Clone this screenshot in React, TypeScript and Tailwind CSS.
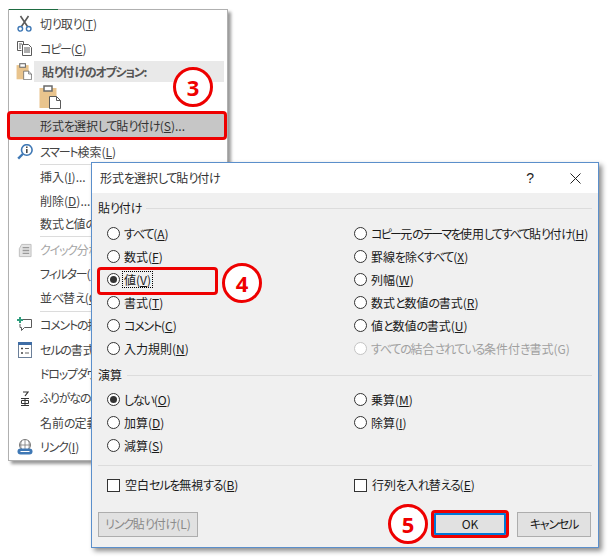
import React from "react";

const FONT = "font-['Noto_Sans_CJK_JP','Noto_Sans',sans-serif] [font-feature-settings:'palt']";

function T({ children, tight }: { children: string; tight?: boolean }) {
  const parts = children.split(/([\u3040-\u30ff]+)/);
  return (
    <>
      {parts.map((p, i) =>
        i % 2 === 1 ? (
          <span key={i} className={tight ? "tracking-[-1.7px]" : "tracking-[-1.2px]"}>
            {p}
          </span>
        ) : (
          <React.Fragment key={i}>{p}</React.Fragment>
        ),
      )}
    </>
  );
}

function L(text: string, k?: string, suffix?: string, tight?: boolean) {
  return (
    <>
      <T tight={tight}>{text}</T>
      {k && (
        <>
          (<u>{k}</u>)
        </>
      )}
      {suffix}
    </>
  );
}

function Scissors() {
  return (
    <svg width="15" height="17" viewBox="0 0 15 17" fill="none">
      <path d="M3.5 1l7 10.5M11.5 1l-7 10.5" stroke="#5a5a5a" strokeWidth="1.6" />
      <circle cx="3.3" cy="13.8" r="2.3" stroke="#3f78b5" strokeWidth="1.4" />
      <circle cx="11.7" cy="13.8" r="2.3" stroke="#3f78b5" strokeWidth="1.4" />
    </svg>
  );
}
function Copy() {
  return (
    <svg width="15" height="15" viewBox="0 0 15 15" fill="none" stroke="#5a5a5a">
      <path d="M.5.5h6v3M.5.5v9h4M2 3h3M2 5h2M2 7h2" />
      <path d="M5.5 3.5h6l3 3v8h-9zM7 7h6M7 9h6M7 11h6" fill="#fff" />
    </svg>
  );
}
function Clipboard({ big }: { big?: boolean }) {
  return (
    <svg width={big ? 22 : 16} height={big ? 24 : 17} viewBox="0 0 22 24" fill="none">
      <rect x="0.5" y="3" width="17" height="20" fill="#e9c48d" />
      <rect x="5" y="1" width="8" height="5" fill="#fff" stroke="#6a6a6a" strokeWidth="1.5" />
      <path d="M10.5 11.5h7l4 4v8h-11z" fill="#fff" stroke="#5a5a5a" />
      <path d="M17.5 11.5v4h4" stroke="#5a5a5a" />
    </svg>
  );
}
function Info() {
  return (
    <svg width="16" height="16" viewBox="0 0 16 16" fill="none">
      <circle cx="9.8" cy="6" r="5.3" stroke="#3f78b5" strokeWidth="1.6" />
      <path d="M5.8 10L1.2 14.6" stroke="#3f78b5" strokeWidth="2.4" />
      <path d="M9.8 5v4M9.8 2.6V4" stroke="#4a4a4a" strokeWidth="1.6" />
    </svg>
  );
}
function Quick() {
  return (
    <svg width="15" height="15" viewBox="0 0 16 16" fill="none" stroke="#bdbdbd">
      <path d="M5 1.5h10v13H2.5V6z" fill="#e4e4e4" />
      <path d="M6 5h7M6 8h7M6 11h7" strokeWidth="1.4" stroke="#9a9a9a" />
    </svg>
  );
}
function Comment() {
  return (
    <svg width="15" height="15" viewBox="0 0 15 15" fill="none">
      <path d="M6 2.5h8.5v8H7.5l-3 3v-3H3V7" stroke="#5a5a5a" />
      <path d="M3 0v6M0 3h6" stroke="#2f9e7e" strokeWidth="2" />
    </svg>
  );
}
function Format() {
  return (
    <svg width="14" height="16" viewBox="0 0 14 16" fill="none">
      <rect x=".5" y=".5" width="13" height="15" fill="#fff" stroke="#6b7f99" />
      <rect x="0" y="0" width="14" height="3" fill="#3f6da5" />
      <path d="M3 6.5h2M3 11h2" stroke="#444" strokeWidth="1.5" />
      <path d="M7 6.5h4M7 11h4" stroke="#666" />
    </svg>
  );
}
function Furigana() {
  return (
    <svg width="8" height="15" viewBox="0 0 8 15" fill="none" stroke="#333">
      <path d="M2 1h5L4 5" strokeWidth="1.2" />
      <path d="M0 7.5h8M.5 9.5h7v3h-7zM4 7.5v7M0 14.5h8" />
    </svg>
  );
}
function LinkIcon() {
  return (
    <svg width="16" height="16" viewBox="0 0 16 16" fill="none">
      <circle cx="8" cy="6" r="5.5" stroke="#7a7a7a" />
      <path d="M2.5 6h11M8 .5v11M4.5 1.5c-1 3-1 6 0 9M11.5 1.5c1 3 1 6 0 9" stroke="#7a7a7a" strokeWidth=".8" />
      <rect x=".5" y="9.5" width="15" height="6" rx="3" fill="#3f78b5" />
      <path d="M3.5 12.5h3M9.5 12.5h3M6 12.5h4" stroke="#fff" strokeWidth="1.2" />
    </svg>
  );
}

type Row = { h: number; label?: React.ReactNode; icon?: React.ReactNode; disabled?: boolean; sep?: boolean };

const rowsTop: Row[] = [
  { h: 25, label: L("切り取り", "T"), icon: <Scissors /> },
  { h: 25, label: L("コピー", "C"), icon: <Copy /> },
];

const rowsBottom: Row[] = [
  { h: 23, label: L("スマート検索", "L"), icon: <Info /> },
  { h: 2, sep: true },
  { h: 24, label: L("挿入", "I", "...") },
  { h: 24, label: L("削除", "D", "...") },
  { h: 22, label: L("数式と値のクリア", "N") },
  { h: 3, sep: true },
  { h: 24, label: L("クイック分析", "Q"), icon: <Quick />, disabled: true },
  { h: 24, label: L("フィルター", "E") },
  { h: 24, label: L("並べ替え", "O") },
  { h: 2, sep: true },
  { h: 25, label: L("コメントの挿入", "M"), icon: <Comment /> },
  { h: 25, label: L("セルの書式設定", "F", "..."), icon: <Format /> },
  { h: 24, label: L("ドロップダウン リストから選択", "K", "...") },
  { h: 24, label: L("ふりがなの表示", "S"), icon: <Furigana /> },
  { h: 25, label: L("名前の定義", "A", "...") },
  { h: 24, label: L("リンク", "I"), icon: <LinkIcon /> },
];

function MenuRow({ r }: { r: Row }) {
  if (r.sep) {
    return (
      <div style={{ height: r.h }} className="flex items-center pl-[31px] pr-[3px]">
        <div className="h-px w-full bg-[#dcdcdc]" />
      </div>
    );
  }
  return (
    <div style={{ height: r.h }} className="flex items-center">
      <div className="flex w-[31px] shrink-0 justify-center">{r.icon}</div>
      <div className={`whitespace-nowrap text-[12px] leading-[16px] ${r.disabled ? "text-[#a6a6a6]" : "text-[#444]"}`}>{r.label}</div>
    </div>
  );
}

function ContextMenu() {
  return (
    <div className="absolute left-[8px] top-[9px] flex h-[452px] w-[220px] flex-col border border-[#b0b0b0] bg-white pt-[1px] shadow-[3px_3px_3px_rgba(0,0,0,0.4)]">
      {rowsTop.map((r, i) => (
        <MenuRow key={i} r={r} />
      ))}
      <div className="flex h-[21px] items-center">
        <div className="flex w-[24px] shrink-0 justify-center pl-[5px]">
          <Clipboard />
        </div>
        <div className="ml-[1px] mr-[3px] flex h-full flex-1 items-center bg-[#e9e9e9] pl-[8px] text-[12px] font-bold leading-none text-[#555]">
          <span>{L("貼り付けのオプション:")}</span>
        </div>
      </div>
      <div className="flex h-[29px] items-center pl-[30px]">
        <Clipboard big />
      </div>
      <div className="relative -ml-[2px] flex h-[29px] w-[220px] shrink-0 items-center rounded-[4px] border-[3px] border-[#ee0000] bg-[#c6c6c6] pl-[30px] text-[12px] leading-none text-[#333]">
        <span>{L("形式を選択して貼り付け", "S", "...")}</span>
      </div>
      {rowsBottom.map((r, i) => (
        <MenuRow key={i} r={r} />
      ))}
    </div>
  );
}

function Radio({ on, disabled }: { on?: boolean; disabled?: boolean }) {
  return (
    <span
      className={`flex h-[13px] w-[13px] shrink-0 items-center justify-center rounded-full border bg-white ${disabled ? "border-[#c4c4c4]" : "border-[#333]"}`}
    >
      {on && <span className="h-[7px] w-[7px] rounded-full bg-[#333]" />}
    </span>
  );
}

function Opt({ label, on, disabled, focus }: { label: React.ReactNode; on?: boolean; disabled?: boolean; focus?: boolean }) {
  return (
    <div className="flex h-[23px] items-center">
      <Radio on={on} disabled={disabled} />
      <span
        className={`ml-[2px] whitespace-nowrap border px-[1px] text-[12px] leading-[15px] ${disabled ? "text-[#a0a0a0]" : "text-[#1a1a1a]"} ${focus ? "border-dotted border-black" : "border-transparent"}`}
      >
        {label}
      </span>
    </div>
  );
}

function Check({ label }: { label: React.ReactNode }) {
  return (
    <div className="flex h-[20px] items-center">
      <span className="h-[13px] w-[13px] shrink-0 border border-[#333] bg-white" />
      <span className="ml-[5px] whitespace-nowrap text-[12px] leading-none text-[#1a1a1a]">{label}</span>
    </div>
  );
}

function GroupTitle({ children }: { children: React.ReactNode }) {
  return (
    <div className="flex h-[16px] items-center">
      <span className="mr-[5px] text-[12px] leading-none text-[#1a1a1a]">{children}</span>
      <div className="h-px flex-1 bg-[#dcdcdc]" />
    </div>
  );
}

function Dialog() {
  return (
    <div className="absolute left-[91px] top-[162px] flex h-[386px] w-[508px] flex-col border border-[#5b8fcb] bg-[#f0f0f0] shadow-[3px_3px_5px_rgba(0,0,0,0.45)]">
      <div className="flex h-[30px] shrink-0 items-center justify-between bg-white pl-[8px] pr-[17px]">
        <span className="text-[12px] leading-none text-[#333]">{L("形式を選択して貼り付け")}</span>
        <div className="flex items-center gap-[36px]">
          <span className="font-['Liberation_Sans',sans-serif] text-[14px] leading-none text-[#222]">?</span>
          <svg width="11" height="11" viewBox="0 0 11 11" stroke="#222" fill="none">
            <path d="M.5.5l10 10M10.5.5l-10 10" />
          </svg>
        </div>
      </div>
      <div className="flex flex-1 flex-col px-[6px] pt-[7px]">
        <GroupTitle>{L("貼り付け")}</GroupTitle>
        <div className="mt-[6px] grid grid-cols-[247px_1fr] pl-[9px]">
          <div className="flex flex-col">
            <Opt label={L("すべて", "A")} />
            <Opt label={L("数式", "F")} />
            <Opt on focus label={L("値", "V")} />
            <Opt label={L("書式", "T")} />
            <Opt label={L("コメント", "C")} />
            <Opt label={L("入力規則", "N")} />
          </div>
          <div className="flex flex-col">
            <Opt label={L("コピー元のテーマを使用してすべて貼り付け", "H", undefined, true)} />
            <Opt label={L("罫線を除くすべて", "X")} />
            <Opt label={L("列幅", "W")} />
            <Opt label={L("数式と数値の書式", "R")} />
            <Opt label={L("値と数値の書式", "U")} />
            <Opt disabled label={L("すべての結合されている条件付き書式(G)")} />
          </div>
        </div>
        <div className="mt-[7px]">
          <GroupTitle>{L("演算")}</GroupTitle>
        </div>
        <div className="mt-[5px] grid grid-cols-[247px_1fr] pl-[9px]">
          <div className="flex flex-col">
            <Opt on label={L("しない", "O")} />
            <Opt label={L("加算", "D")} />
            <Opt label={L("減算", "S")} />
          </div>
          <div className="flex flex-col">
            <Opt label={L("乗算", "M")} />
            <Opt label={L("除算", "I")} />
          </div>
        </div>
        <div className="mt-[8px] h-px bg-[#dcdcdc]" />
        <div className="mt-[9px] grid grid-cols-[247px_1fr] pl-[9px]">
          <Check label={L("空白セルを無視する", "B")} />
          <Check label={L("行列を入れ替える", "E")} />
        </div>
        <div className="mt-[15px] flex items-center">
          <div className="flex h-[25px] w-[100px] items-center justify-center border border-[#adadad] bg-[#e1e1e1] text-[12px] leading-none text-[#8a8a8a]">
            <span>{L("リンク貼り付け(L)")}</span>
          </div>
          <div className="ml-auto flex items-center">
            <div className="flex h-[28px] w-[78px] items-center justify-center rounded-[4px] border-[3px] border-[#ee0000] bg-[#e1e1e1] text-[12px] leading-none text-[#1a1a1a] shadow-[inset_0_0_0_2px_#0078d7]">
              OK
            </div>
            <div className="ml-[8px] mr-[1px] flex h-[25px] w-[74px] items-center justify-center border border-[#adadad] bg-[#e1e1e1] text-[12px] leading-none text-[#1a1a1a]">
              <span>{L("キャンセル")}</span>
            </div>
          </div>
        </div>
      </div>
    </div>
  );
}

function Badge({ n, cls }: { n: string; cls: string }) {
  return (
    <div
      className={`absolute flex h-[40px] w-[40px] items-center justify-center rounded-full border-[3px] border-[#ee0000] bg-white font-['Noto_Sans',sans-serif] text-[22px] font-bold leading-none text-[#ee0000] ${cls}`}
    >
      {n}
    </div>
  );
}

export default function App() {
  return (
    <div className={`relative h-[558px] w-[611px] overflow-hidden bg-white ${FONT}`}>
      <ContextMenu />
      <div className="absolute left-[9px] top-[9px] h-px w-[49px] bg-[#1e6b41]" />
      <Badge n="3" cls="left-[173px] top-[67px]" />
      <Dialog />
      <div className="absolute left-[97px] top-[267px] h-[28px] w-[121px] rounded-[4px] border-[3px] border-[#ee0000]" />
      <Badge n="4" cls="left-[222px] top-[263px]" />
      <Badge n="5" cls="left-[388px] top-[504px]" />
    </div>
  );
}
